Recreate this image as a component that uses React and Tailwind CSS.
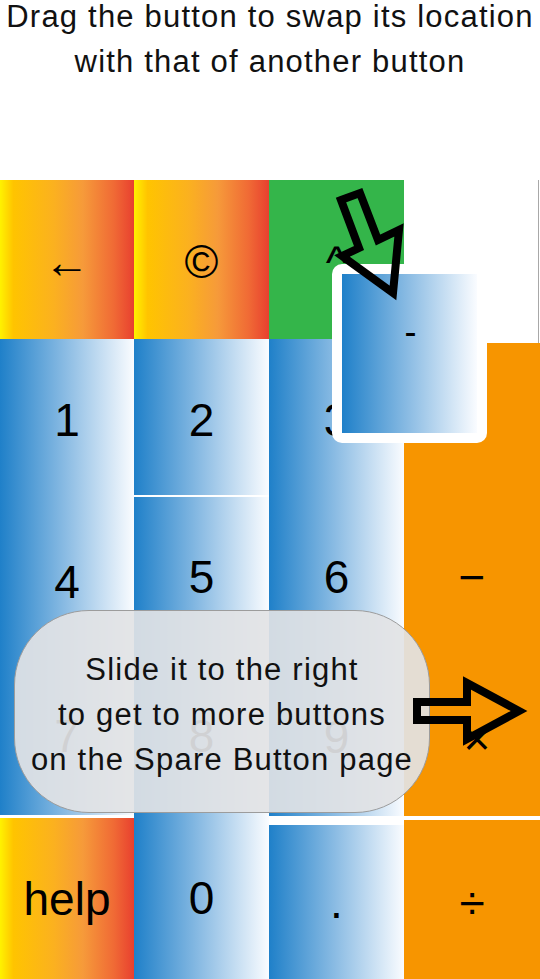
const warm = 'bg-[linear-gradient(to_right,#fff200_0%,#ffc400_10%,#fbb11f_40%,#f69a3a_62%,#f06a35_85%,#e8402f_100%)]'
const blue = 'bg-[linear-gradient(to_right,#1f80c9_0%,#8dbde4_50%,#fafcff_100%)]'

function Key({ label, className = '', inner = '' }) {
  return (
    <div className={`flex items-center justify-center text-[46px] leading-none text-black ${className}`}>
      <span className={inner}>{label}</span>
    </div>
  )
}

export default function App() {
  return (
    <div className="relative w-[540px] h-[979px] overflow-hidden bg-white font-['Liberation_Sans',Arial,sans-serif]">
      <div className="h-[180px] flex flex-col items-center text-center text-[31px] leading-[45px] tracking-[1.2px] text-[#111]">
        <p className="mt-[-6px]">Drag the button to swap its location</p>
        <p>with that of another button</p>
      </div>

      <div className="grid grid-cols-[134px_135px_135px_136px] h-[799px]">
        {/* column 1 */}
        <div className="flex flex-col">
          <Key label="←" className={`h-[159px] ${warm}`} inner="pt-[4px]" />
          <Key label="1" className={`h-[158px] ${blue}`} inner="pt-[4px]" />
          <Key label="4" className={`h-[160px] ${blue}`} inner="pt-[10px]" />
          <Key label="7" className={`h-[158px] ${blue}`} />
          <div className="h-[3px]" />
          <Key label="help" className={`h-[161px] ${warm}`} />
        </div>

        {/* column 2 */}
        <div className="flex flex-col">
          <Key label="©" className={`h-[159px] ${warm}`} inner="pt-[4px]" />
          <Key label="2" className={`h-[156px] ${blue}`} inner="pt-[6px]" />
          <div className="h-[2px]" />
          <Key label="5" className={`h-[160px] ${blue}`} />
          <Key label="8" className={`h-[158px] ${blue}`} />
          <Key label="0" className={`h-[164px] ${blue}`} inner="pt-[2px]" />
        </div>

        {/* column 3 */}
        <div className="flex flex-col">
          <Key label="^" className="h-[159px] bg-[#34b54a]" inner="pt-[4px]" />
          <Key label="3" className={`h-[158px] ${blue}`} inner="pt-[4px]" />
          <Key label="6" className={`h-[160px] ${blue}`} />
          <Key label="9" className={`h-[159px] ${blue}`} />
          <div className="h-[9px]" />
          <Key label="." className={`h-[154px] ${blue}`} />
        </div>

        {/* column 4 */}
        <div className="flex flex-col">
          <div className="h-[163px] mr-[1px] border-r border-[#a8a8a8]" />
          <div className="h-[473px] flex flex-col bg-[#f79500]">
            <div className="h-[154px]" />
            <Key label="−" className="h-[160px]" />
            <Key label="×" className="h-[159px]" inner="pt-[4px] pl-[10px]" />
          </div>
          <div className="h-[4px]" />
          <Key label="÷" className="h-[159px] bg-[#f79500]" inner="pt-[6px]" />
        </div>
      </div>

      {/* button being dragged */}
      <div className="absolute left-[332px] top-[264px] w-[155px] h-[179px] rounded-[10px] bg-white p-[10px]">
        <div className={`h-full flex justify-center pt-[40px] pl-[2px] text-[36px] leading-none text-black ${blue}`}>
          -
        </div>
      </div>

      {/* hint bubble */}
      <div className="absolute left-[14px] top-[610px] w-[416px] h-[203px] rounded-[75px] border border-[#9c9c9c] bg-[rgba(226,227,229,0.92)] flex flex-col items-center justify-center pt-[6px] text-[31px] leading-[45px] tracking-[1.2px] text-[#111]">
        <p>Slide it to the right</p>
        <p>to get to more buttons</p>
        <p>on the Spare Button page</p>
      </div>

      {/* arrows */}
      <svg className="absolute inset-0 pointer-events-none" width="540" height="979" viewBox="0 0 540 979">
        <polygon
          points="341,200 360,193 378,240 399,230 393,293 342,256 359,248"
          fill="none"
          stroke="#000"
          strokeWidth="8"
          strokeLinejoin="miter"
        />
        <polygon
          points="417,702 467,702 467,683 519,711 467,739 467,720 417,720"
          fill="none"
          stroke="#000"
          strokeWidth="8"
          strokeLinejoin="miter"
        />
      </svg>
    </div>
  )
}
